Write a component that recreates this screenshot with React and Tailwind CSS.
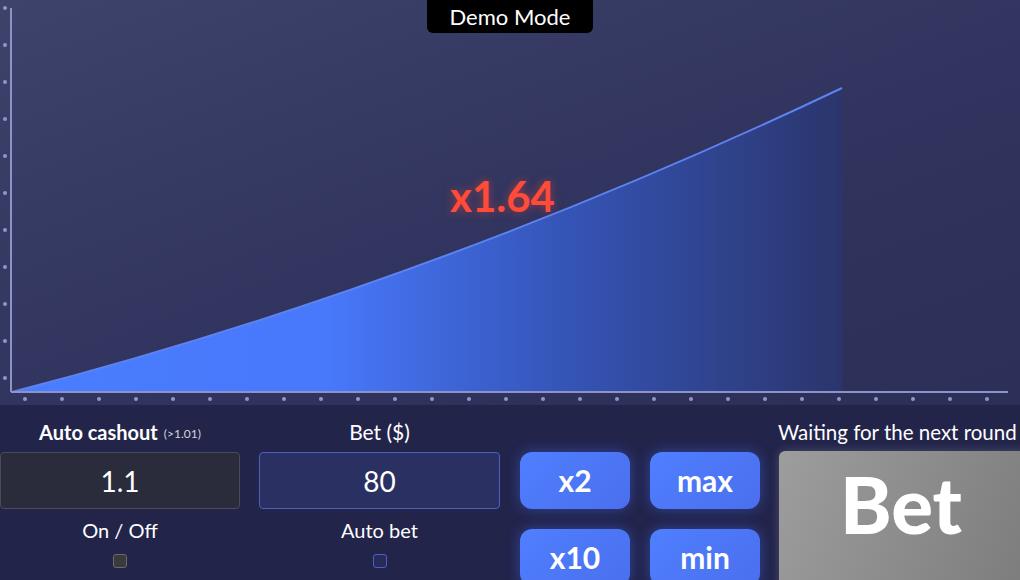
import React from "react";

const FONT = { fontFamily: "Lato, 'Open Sans', sans-serif" };

const yDots = [8, 45, 82, 119, 156, 193, 230, 267, 304, 341, 378];
const xDots = Array.from({ length: 27 }, (_, i) => 25 + i * 37);

function Chart() {
    return <svg className="absolute inset-0" width="1020" height="405" viewBox="0 0 1020 405">
        <defs>
            <linearGradient id="fill" x1="12" y1="0" x2="842" y2="0" gradientUnits="userSpaceOnUse">
                <stop offset="0" stopColor="#4a7dff" />
                <stop offset="0.38" stopColor="#4878fb" />
                <stop offset="0.66" stopColor="#3555b8" />
                <stop offset="1" stopColor="#2b356c" />
            </linearGradient>
        </defs>
        <path d="M12 392 Q427 285 842 88 L842 392 Z" fill="url(#fill)" />
        <path d="M12 392 Q427 285 842 88" fill="none" stroke="#5d82f2" strokeWidth="2" />
        <line x1="11" y1="8" x2="11" y2="392" stroke="#8d93c9" strokeWidth="2" />
        <line x1="11" y1="392" x2="1008" y2="392" stroke="#8d93c9" strokeWidth="2" />
        {yDots.map(y => <circle key={y} cx="5" cy={y} r="2" fill="#9097c8" />)}
        {xDots.map(x => <circle key={x} cx={x} cy="399" r="2" fill="#9097c8" />)}
    </svg>
}

function Btn({ children }) {
    return <div className="w-[110px] h-[57px] rounded-xl flex items-center justify-center text-white font-bold text-[30px] bg-[linear-gradient(135deg,#4f7fff,#4a6fee)] shadow-[0_0_14px_rgba(70,110,255,0.45)]">
        {children}
    </div>
}

export default function App() {
    return <div style={FONT} className="w-[1020px] h-[580px] overflow-hidden bg-[#22244a] text-white">
        <div className="relative h-[405px] bg-[linear-gradient(160deg,#3e436b_0%,#30345e_55%,#2c3058_100%)]">
            <Chart />
            <div className="absolute top-0 left-[427px] w-[166px] h-[33px] bg-black rounded-b-md flex items-center justify-center text-[22px] leading-none">
                Demo Mode
            </div>
            <div className="absolute top-[175px] left-[450px] text-[42px] font-bold leading-none text-[#ff4b38] [text-shadow:0_0_10px_rgba(255,70,50,0.5)]">
                x1.64
            </div>
        </div>

        <div className="flex pt-[15px]">
            <div className="w-[240px] shrink-0 flex flex-col items-center">
                <div className="h-6 flex items-center gap-1.5">
                    <span className="font-bold text-[20px]">Auto cashout</span>
                    <span className="text-[12px] text-gray-300 mt-1">(&gt;1.01)</span>
                </div>
                <div className="mt-2 w-full h-[57px] rounded bg-[#2a2b3b] border border-[#4a4b58] flex items-center justify-center text-[28px]">1.1</div>
                <div className="mt-[10px] h-[22px] text-[20px] leading-[22px]">On / Off</div>
                <div className="mt-[13px] w-[14px] h-[14px] rounded-[3px] bg-[#3a3a3c] border border-[#6a6a70]"></div>
            </div>

            <div className="ml-[19px] w-[241px] shrink-0 flex flex-col items-center">
                <div className="h-6 flex items-center text-[21px]">Bet ($)</div>
                <div className="mt-2 w-full h-[57px] rounded bg-[#2b3062] border border-[#4d5fc0] flex items-center justify-center text-[28px]">80</div>
                <div className="mt-[10px] h-[22px] text-[20px] leading-[22px]">Auto bet</div>
                <div className="mt-[13px] w-[14px] h-[14px] rounded-[3px] bg-[#272b5a] border border-[#4d5fc0]"></div>
            </div>

            <div className="ml-5 mt-8 grid grid-cols-2 gap-5 h-fit shrink-0">
                <Btn>x2</Btn>
                <Btn>max</Btn>
                <Btn>x10</Btn>
                <Btn>min</Btn>
            </div>

            <div className="ml-[19px] flex flex-col shrink-0">
                <div className="h-6 flex items-center text-[20.5px] whitespace-nowrap -ml-px">Waiting for the next round</div>
                <div className="mt-[7px] w-[260px] h-[140px] rounded-t-md bg-[linear-gradient(110deg,#9d9d9d,#7b7b7b)] shadow-[0_0_10px_rgba(200,200,220,0.25)] flex justify-center pt-[14px] pr-[16px]">
                    <span className="font-black text-[78px] leading-none">Bet</span>
                </div>
            </div>
        </div>
    </div>
}
